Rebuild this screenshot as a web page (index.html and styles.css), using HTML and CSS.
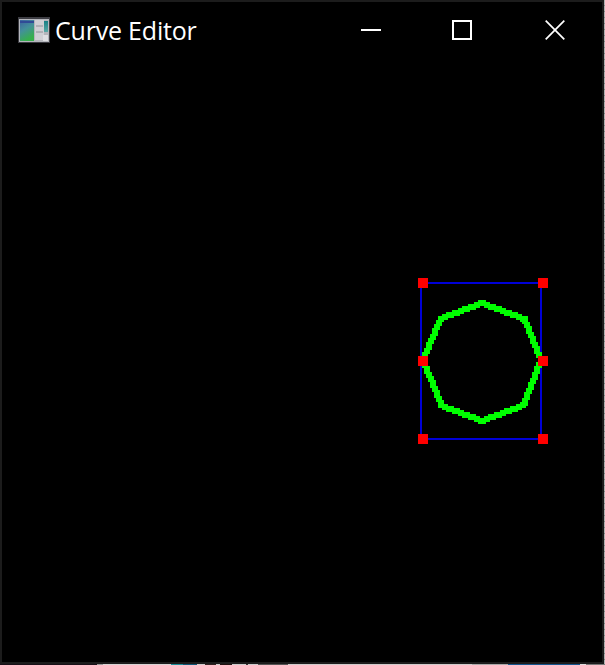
FILE: index.html
```
<!DOCTYPE html>
<html lang="en">
<head>
<meta charset="utf-8">
<title>Curve Editor</title>
<link rel="stylesheet" href="styles.css">
</head>
<body>
<div class="window">
  <header class="titlebar">
    <svg class="app-icon" width="32" height="26" viewBox="0 0 32 26">
      <defs>
        <linearGradient id="screen" x1="0" y1="0" x2=".4" y2="1"><stop offset="0" stop-color="#3c62a0"/><stop offset=".5" stop-color="#43909a"/><stop offset="1" stop-color="#36b04c"/></linearGradient>
        <linearGradient id="side" x1="0" y1="0" x2="0" y2="1"><stop offset="0" stop-color="#167f85"/><stop offset="1" stop-color="#5aa9a6"/></linearGradient>
      </defs>
      <rect width="32" height="26" fill="#3c3c42"/>
      <rect x="1" y="2" width="30" height="23" fill="#b4b5bb"/>
      <rect x="2" y="3" width="14" height="21" fill="url(#screen)"/>
      <path d="M2 4h14v2H2z" fill="#304b96"/>
      <path d="M17 3h9v20h-9z" fill="#cfcfd4"/>
      <path d="M18 9h7M18 15h7" stroke="#909098"/>
      <path d="M26 4h4v11h-4z" fill="url(#side)"/>
      <path d="M25 18h5v6h-5z" fill="#dedee2"/>
    </svg>
    <h1 class="title">Curve Editor</h1>
    <div class="controls">
      <svg width="20" height="20"><path d="M0 10h20" stroke="#fff" stroke-width="2"/></svg>
      <svg width="20" height="20"><path d="M1 1h18v18H1z" fill="none" stroke="#fff" stroke-width="2"/></svg>
      <svg class="close" width="20" height="20"><path d="M.7.7l18.6 18.6M19.3.7L.7 19.3" stroke="#fff" stroke-width="1.7"/></svg>
    </div>
  </header>
  <main class="workspace">
    <svg class="curve" width="130" height="166" viewBox="418 278 130 166" shape-rendering="crispEdges">
      <path d="M421 283H541V439H421Z" fill="none" stroke="#0000d8" stroke-width="2"/>
      <g id="stroke" fill="#0f0"></g>
      <path d="M418 278h10v10h-10zM538 278h10v10h-10zM418 356h10v10h-10zM538 356h10v10h-10zM418 434h10v10h-10zM538 434h10v10h-10z" fill="red"/>
    </svg>
  </main>
</div>
<div class="edge-right"></div>
<div class="edge-bottom"></div>
<script src="curve.js"></script>
</body>
</html>
```
FILE: styles.css
```
* { box-sizing: border-box; }
body {
  margin: 0;
  width: 605px;
  height: 665px;
  display: grid;
  grid-template: 664px 1px / 604px 1px;
  overflow: hidden;
  background: #000;
}
.window {
  display: flex;
  flex-direction: column;
  border: 2px solid #1c1c1c;
  background: #000;
}
.titlebar {
  display: flex;
  align-items: center;
  height: 56px;
  padding: 0 37px 0 16px;
}
.app-icon { display: block; }
.title {
  margin: 0 0 0 5px;
  font: 400 25px/34px "Open Sans", "Noto Sans", sans-serif;
  letter-spacing: -0.2px;
  color: #fff;
}
.controls {
  display: flex;
  gap: 71px;
  margin-left: auto;
}
.controls svg { display: block; }
.controls .close { margin-left: 2px; }
.workspace {
  flex: 1;
  padding: 220px 0 0 416px;
}
.curve { display: block; }
.edge-right {
  background: repeating-linear-gradient(#b0b0b0 0 5px, #858585 5px 6px);
}
.edge-bottom {
  grid-column: 1 / 3;
  background: linear-gradient(90deg, #181018 0 97px, #999 97px 103px, #d8d5d5 103px 171px, #1a8f9a 171px 183px, #0d5778 183px 197px, #d0cccc 197px 205px, #302020 205px 216px, #ccc 216px 220px, #201010 220px 232px, #ccc 232px 246px, #333 246px 248px, #ccc 248px 258px, #555 258px 288px, #d0cccc 288px 472px, #aaa 472px 508px, #14568f 508px 580px, #ddd 580px 586px, #777 586px);
}
```
FILE: curve.js
```
// Draws the curve as a thick line on a grid of 2px cells.
const points = [[482, 303], [524, 319], [541, 361], [524, 405], [482, 421], [441, 405], [423, 361], [441, 319]];
const group = document.getElementById("stroke");
const snap = (v) => Math.floor(v / 2) * 2;
function cell(x, y, w, h) {
  const r = document.createElementNS("http://www.w3.org/2000/svg", "rect");
  Object.entries({ x, y, width: w, height: h }).forEach(([k, v]) => r.setAttribute(k, v));
  group.appendChild(r);
}
points.forEach(([x1, y1], i) => {
  const [x2, y2] = points[(i + 1) % points.length];
  const steep = Math.abs(y2 - y1) > Math.abs(x2 - x1);
  const n = Math.ceil(Math.max(Math.abs(x2 - x1), Math.abs(y2 - y1)) / 2);
  for (let k = 0; k <= n; k++) {
    const x = snap(x1 + (x2 - x1) * k / n);
    const y = snap(y1 + (y2 - y1) * k / n);
    if (steep) cell(x - 2, y - 2, 6, 4);
    else cell(x - 2, y - 2, 4, 6);
  }
});
```
